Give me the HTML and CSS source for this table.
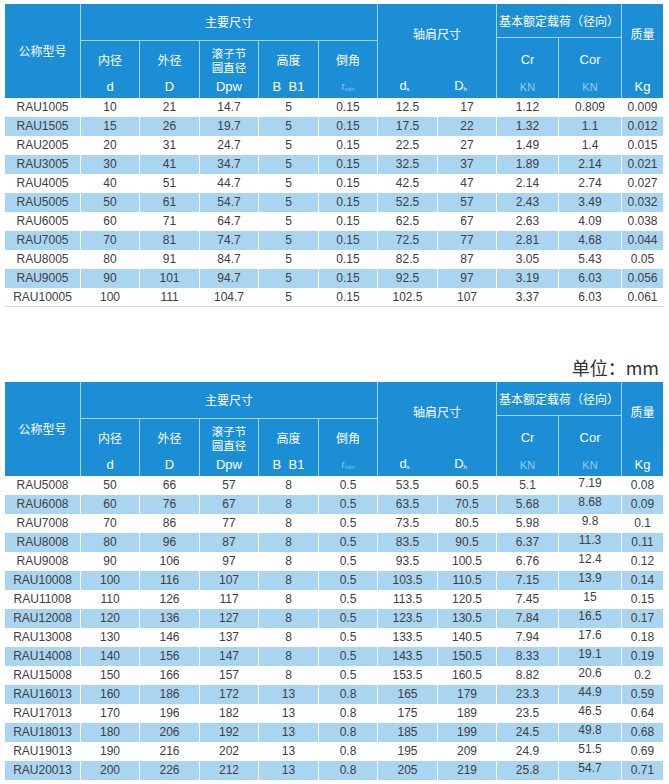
FILE: index.html
```html
<!DOCTYPE html>
<html lang="zh">
<head>
<meta charset="utf-8">
<title>RAU 交叉滚子轴承尺寸表</title>
<link rel="stylesheet" href="styles.css">
</head>
<body>
<div class="page">

  <div class="table">
    <div class="thead">
      <div class="h h-model">公称型号</div>
      <div class="h h-main">主要尺寸</div>
      <div class="h h-shoulder"><span class="lbl lbl-high">轴肩尺寸</span><span class="unit pair"><span>d<sub>s</sub></span><span>D<sub>h</sub></span></span></div>
      <div class="h h-load">基本额定载荷（径向）</div>
      <div class="h h-mass"><span class="lbl lbl-high">质量</span><span class="unit">Kg</span></div>
      <div class="h c2"><span class="lbl">内径</span><span class="unit">d</span></div>
      <div class="h c3"><span class="lbl">外径</span><span class="unit">D</span></div>
      <div class="h c4"><span class="lbl two"><span class="ln">滚子节</span><span class="ln">圆直径</span></span><span class="unit">Dpw</span></div>
      <div class="h c5"><span class="lbl">高度</span><span class="unit">B&nbsp;&nbsp;B1</span></div>
      <div class="h c6"><span class="lbl">倒角</span><span class="unit dim">r<sub>min</sub></span></div>
      <div class="h c9"><span class="lbl lbl-low">Cr</span><span class="unit dim kn">KN</span></div>
      <div class="h c10"><span class="lbl lbl-low">Cor</span><span class="unit dim kn">KN</span></div>
    </div>
    <div class="row"><span>RAU1005</span><span>10</span><span>21</span><span>14.7</span><span>5</span><span>0.15</span><span>12.5</span><span>17</span><span>1.12</span><span>0.809</span><span>0.009</span></div>
    <div class="row alt"><span>RAU1505</span><span>15</span><span>26</span><span>19.7</span><span>5</span><span>0.15</span><span>17.5</span><span>22</span><span>1.32</span><span>1.1</span><span>0.012</span></div>
    <div class="row"><span>RAU2005</span><span>20</span><span>31</span><span>24.7</span><span>5</span><span>0.15</span><span>22.5</span><span>27</span><span>1.49</span><span>1.4</span><span>0.015</span></div>
    <div class="row alt"><span>RAU3005</span><span>30</span><span>41</span><span>34.7</span><span>5</span><span>0.15</span><span>32.5</span><span>37</span><span>1.89</span><span>2.14</span><span>0.021</span></div>
    <div class="row"><span>RAU4005</span><span>40</span><span>51</span><span>44.7</span><span>5</span><span>0.15</span><span>42.5</span><span>47</span><span>2.14</span><span>2.74</span><span>0.027</span></div>
    <div class="row alt"><span>RAU5005</span><span>50</span><span>61</span><span>54.7</span><span>5</span><span>0.15</span><span>52.5</span><span>57</span><span>2.43</span><span>3.49</span><span>0.032</span></div>
    <div class="row"><span>RAU6005</span><span>60</span><span>71</span><span>64.7</span><span>5</span><span>0.15</span><span>62.5</span><span>67</span><span>2.63</span><span>4.09</span><span>0.038</span></div>
    <div class="row alt"><span>RAU7005</span><span>70</span><span>81</span><span>74.7</span><span>5</span><span>0.15</span><span>72.5</span><span>77</span><span>2.81</span><span>4.68</span><span>0.044</span></div>
    <div class="row"><span>RAU8005</span><span>80</span><span>91</span><span>84.7</span><span>5</span><span>0.15</span><span>82.5</span><span>87</span><span>3.05</span><span>5.43</span><span>0.05</span></div>
    <div class="row alt"><span>RAU9005</span><span>90</span><span>101</span><span>94.7</span><span>5</span><span>0.15</span><span>92.5</span><span>97</span><span>3.19</span><span>6.03</span><span>0.056</span></div>
    <div class="row last"><span>RAU10005</span><span>100</span><span>111</span><span>104.7</span><span>5</span><span>0.15</span><span>102.5</span><span>107</span><span>3.37</span><span>6.03</span><span>0.061</span></div>
  </div>

  <div class="unit-note">单位：mm</div>

  <div class="table">
    <div class="thead">
      <div class="h h-model">公称型号</div>
      <div class="h h-main">主要尺寸</div>
      <div class="h h-shoulder"><span class="lbl lbl-high">轴肩尺寸</span><span class="unit pair"><span>d<sub>s</sub></span><span>D<sub>h</sub></span></span></div>
      <div class="h h-load">基本额定载荷（径向）</div>
      <div class="h h-mass"><span class="lbl lbl-high">质量</span><span class="unit">Kg</span></div>
      <div class="h c2"><span class="lbl">内径</span><span class="unit">d</span></div>
      <div class="h c3"><span class="lbl">外径</span><span class="unit">D</span></div>
      <div class="h c4"><span class="lbl two"><span class="ln">滚子节</span><span class="ln">圆直径</span></span><span class="unit">Dpw</span></div>
      <div class="h c5"><span class="lbl">高度</span><span class="unit">B&nbsp;&nbsp;B1</span></div>
      <div class="h c6"><span class="lbl">倒角</span><span class="unit dim">r<sub>min</sub></span></div>
      <div class="h c9"><span class="lbl lbl-low">Cr</span><span class="unit dim kn">KN</span></div>
      <div class="h c10"><span class="lbl lbl-low">Cor</span><span class="unit dim kn">KN</span></div>
    </div>
    <div class="row"><span>RAU5008</span><span>50</span><span>66</span><span>57</span><span>8</span><span>0.5</span><span>53.5</span><span>60.5</span><span>5.1</span><span class="up">7.19</span><span>0.08</span></div>
    <div class="row alt"><span>RAU6008</span><span>60</span><span>76</span><span>67</span><span>8</span><span>0.5</span><span>63.5</span><span>70.5</span><span>5.68</span><span class="up">8.68</span><span>0.09</span></div>
    <div class="row"><span>RAU7008</span><span>70</span><span>86</span><span>77</span><span>8</span><span>0.5</span><span>73.5</span><span>80.5</span><span>5.98</span><span class="up">9.8</span><span>0.1</span></div>
    <div class="row alt"><span>RAU8008</span><span>80</span><span>96</span><span>87</span><span>8</span><span>0.5</span><span>83.5</span><span>90.5</span><span>6.37</span><span class="up">11.3</span><span>0.11</span></div>
    <div class="row"><span>RAU9008</span><span>90</span><span>106</span><span>97</span><span>8</span><span>0.5</span><span>93.5</span><span>100.5</span><span>6.76</span><span class="up">12.4</span><span>0.12</span></div>
    <div class="row alt"><span>RAU10008</span><span>100</span><span>116</span><span>107</span><span>8</span><span>0.5</span><span>103.5</span><span>110.5</span><span>7.15</span><span class="up">13.9</span><span>0.14</span></div>
    <div class="row"><span>RAU11008</span><span>110</span><span>126</span><span>117</span><span>8</span><span>0.5</span><span>113.5</span><span>120.5</span><span>7.45</span><span class="up">15</span><span>0.15</span></div>
    <div class="row alt"><span>RAU12008</span><span>120</span><span>136</span><span>127</span><span>8</span><span>0.5</span><span>123.5</span><span>130.5</span><span>7.84</span><span class="up">16.5</span><span>0.17</span></div>
    <div class="row"><span>RAU13008</span><span>130</span><span>146</span><span>137</span><span>8</span><span>0.5</span><span>133.5</span><span>140.5</span><span>7.94</span><span class="up">17.6</span><span>0.18</span></div>
    <div class="row alt"><span>RAU14008</span><span>140</span><span>156</span><span>147</span><span>8</span><span>0.5</span><span>143.5</span><span>150.5</span><span>8.33</span><span class="up">19.1</span><span>0.19</span></div>
    <div class="row"><span>RAU15008</span><span>150</span><span>166</span><span>157</span><span>8</span><span>0.5</span><span>153.5</span><span>160.5</span><span>8.82</span><span class="up">20.6</span><span>0.2</span></div>
    <div class="row alt"><span>RAU16013</span><span>160</span><span>186</span><span>172</span><span>13</span><span>0.8</span><span>165</span><span>179</span><span>23.3</span><span class="up">44.9</span><span>0.59</span></div>
    <div class="row"><span>RAU17013</span><span>170</span><span>196</span><span>182</span><span>13</span><span>0.8</span><span>175</span><span>189</span><span>23.5</span><span class="up">46.5</span><span>0.64</span></div>
    <div class="row alt"><span>RAU18013</span><span>180</span><span>206</span><span>192</span><span>13</span><span>0.8</span><span>185</span><span>199</span><span>24.5</span><span class="up">49.8</span><span>0.68</span></div>
    <div class="row"><span>RAU19013</span><span>190</span><span>216</span><span>202</span><span>13</span><span>0.8</span><span>195</span><span>209</span><span>24.9</span><span class="up">51.5</span><span>0.69</span></div>
    <div class="row alt"><span>RAU20013</span><span>200</span><span>226</span><span>212</span><span>13</span><span>0.8</span><span>205</span><span>219</span><span>25.8</span><span class="up">54.7</span><span>0.71</span></div>
  </div>

</div>
</body>
</html>
```

FILE: styles.css
```css
html, body {
  margin: 0;
  padding: 0;
  background: #ffffff;
}

.page {
  padding: 4px 6px 0 5px;
  font-family: "Liberation Sans", Arial, "Noto Sans CJK SC", sans-serif;
  color: #404040;
}

.table {
  width: 658px;
}

.thead,
.row {
  display: grid;
  grid-template-columns: 75px 58px 59px 58px 59px 58px 59px 58px 61px 62px 41px;
  column-gap: 1px;
}

.thead {
  grid-template-rows: 33px 2px 57px;
  row-gap: 1px;
  background: #a3d6f4;
}

.h {
  background: #1b8ed6;
  color: #ffffff;
  font-family: "Noto Sans CJK SC", "Liberation Sans", sans-serif;
  font-size: 12px;
  display: grid;
  grid-template-rows: 1fr 20px;
  justify-items: center;
  align-items: center;
  text-align: center;
  line-height: 14px;
}

.h-model {
  grid-column: 1;
  grid-row: 1 / 4;
  grid-template-rows: 1fr;
}

.h-main {
  grid-column: 2 / 7;
  grid-row: 1 / 3;
  grid-template-rows: 1fr;
}

.h-shoulder {
  grid-column: 7 / 9;
  grid-row: 1 / 4;
  justify-items: stretch;
}

.h-shoulder .lbl {
  justify-self: center;
}

.h-load {
  grid-column: 9 / 11;
  grid-row: 1 / 2;
  grid-template-rows: 1fr;
}

.h-mass {
  grid-column: 11;
  grid-row: 1 / 4;
}

.c2 { grid-column: 2; grid-row: 3; }
.c3 { grid-column: 3; grid-row: 3; }
.c4 { grid-column: 4; grid-row: 3; }
.c5 { grid-column: 5; grid-row: 3; }
.c6 { grid-column: 6; grid-row: 3; }
.c9 { grid-column: 9; grid-row: 2 / 4; }
.c10 { grid-column: 10; grid-row: 2 / 4; }

.lbl-high {
  padding-bottom: 14px;
}

.lbl-low {
  padding-top: 4px;
  font-family: "Liberation Sans", Arial, sans-serif;
  font-size: 13px;
}

.lbl.two {
  display: flex;
  flex-direction: column;
  align-items: center;
  padding-top: 1px;
  font-size: 11.5px;
}

.lbl.two .ln {
  display: block;
  height: 14px;
  line-height: 14px;
  overflow: hidden;
}

.unit {
  font-family: "Liberation Sans", Arial, sans-serif;
  font-size: 13px;
  line-height: 20px;
  padding-bottom: 2px;
}

.unit.dim {
  color: #8fcdf3;
  font-size: 10px;
}

.unit.kn {
  font-size: 11px;
}

.unit sub {
  font-size: 6px;
  vertical-align: baseline;
  position: relative;
  top: 1px;
}

.unit.pair {
  display: grid;
  grid-template-columns: 1fr 1fr;
  justify-items: center;
  width: 100%;
}

.unit.pair > span:first-child {
  padding-right: 6px;
}

.unit.pair > span:last-child {
  padding-right: 12px;
}

.row {
  height: 19px;
  background: #ffffff;
}

.row > span {
  font-size: 12px;
  line-height: 19px;
  text-align: center;
  white-space: nowrap;
}

.row.alt > span {
  background: #aad5f1;
}

.row > span.up {
  line-height: 15px;
}

.row.last {
  height: 18px;
  border-bottom: 1px solid #d3dbe1;
}

.unit-note {
  height: 75px;
  width: 658px;
  box-sizing: border-box;
  display: flex;
  justify-content: flex-end;
  align-items: flex-end;
  padding: 0 4px 4px 0;
  font-family: "Noto Sans CJK SC", "Liberation Sans", sans-serif;
  font-size: 18px;
  line-height: 22px;
  color: #333333;
}
```
